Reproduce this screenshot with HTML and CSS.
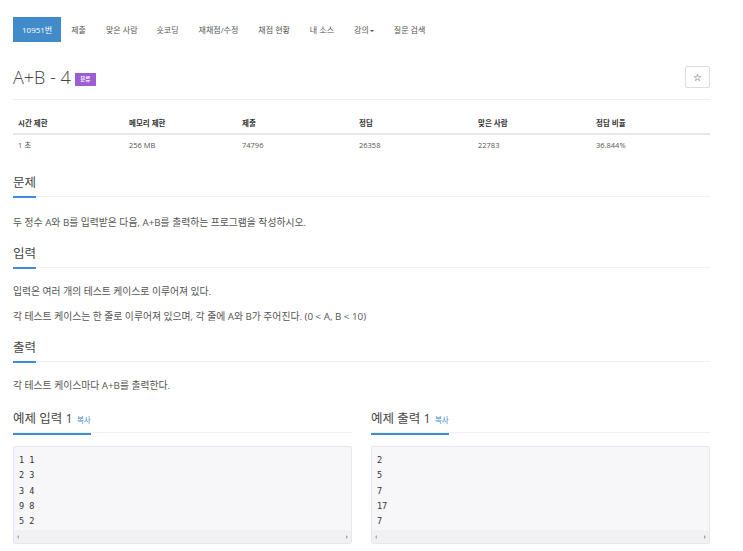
FILE: index.html
```html
<!DOCTYPE html>
<html lang="ko">
<head>
<meta charset="utf-8">
<link rel="stylesheet" href="styles.css">
</head>
<body>
<div class="wrap">
  <ul class="nav">
    <li class="active">10951번</li>
    <li>제출</li>
    <li>맞은 사람</li>
    <li>숏코딩</li>
    <li>재채점/수정</li>
    <li>채점 현황</li>
    <li>내 소스</li>
    <li>강의<span class="caret"></span></li>
    <li>질문 검색</li>
  </ul>

  <div class="page-header">
    <h1 class="title">A+B - 4<span class="badge">분류</span></h1>
    <span class="star-btn">☆</span>
  </div>

  <table class="info">
    <colgroup>
      <col style="width:111px"><col style="width:113px"><col style="width:117px"><col style="width:119px"><col style="width:118px"><col style="width:119px">
    </colgroup>
    <thead>
      <tr><th>시간 제한</th><th>메모리 제한</th><th>제출</th><th>정답</th><th>맞은 사람</th><th>정답 비율</th></tr>
    </thead>
    <tbody>
      <tr><td><span class="num">1</span> 초</td><td>256 MB</td><td>74796</td><td>26358</td><td>22783</td><td>36.844%</td></tr>
    </tbody>
  </table>

  <section class="sec first">
    <div class="headline"><h2>문제</h2></div>
    <p>두 정수 A와 B를 입력받은 다음, A+B를 출력하는 프로그램을 작성하시오.</p>
  </section>

  <section class="sec">
    <div class="headline"><h2>입력</h2></div>
    <p>입력은 여러 개의 테스트 케이스로 이루어져 있다.</p>
    <p>각 테스트 케이스는 한 줄로 이루어져 있으며, 각 줄에 A와 B가 주어진다. (0 &lt; A, B &lt; 10)</p>
  </section>

  <section class="sec">
    <div class="headline"><h2>출력</h2></div>
    <p>각 테스트 케이스마다 A+B를 출력한다.</p>
  </section>

  <div class="samples">
    <section class="sample">
      <div class="headline"><h2>예제 입력 1 <span class="copy">복사</span></h2></div>
      <div class="pre-box">
        <pre>1 1
2 3
3 4
9 8
5 2</pre>
        <div class="scroll"><span class="arr-l"></span><span class="arr-r"></span></div>
      </div>
    </section>
    <section class="sample">
      <div class="headline"><h2>예제 출력 1 <span class="copy">복사</span></h2></div>
      <div class="pre-box">
        <pre>2
5
7
17
7</pre>
        <div class="scroll"><span class="arr-l"></span><span class="arr-r"></span></div>
      </div>
    </section>
  </div>
</div>
</body>
</html>
```

FILE: styles.css
```css
* { box-sizing: border-box; }
html, body { margin: 0; padding: 0; background: #fff; }
body {
  font-family: "Open Sans", "Noto Sans CJK KR", sans-serif;
  font-size: 9px;
  color: #555;
}
.wrap { padding: 17px 33px 0 13px; }

.nav {
  list-style: none;
  margin: 0;
  padding: 0;
  display: flex;
  height: 25px;
}
.nav li {
  padding: 0 10px;
  font-size: 8px;
  line-height: 25px;
  color: #555;
  white-space: nowrap;
}
.nav li:nth-child(3) { padding-right: 9px; }
.nav li.active {
  background: #428bca;
  color: #fff;
  padding: 0 9px;
}
.caret {
  display: inline-block;
  width: 0; height: 0;
  margin-left: 1px;
  vertical-align: middle;
  border-top: 2px solid #555;
  border-left: 2px solid transparent;
  border-right: 2px solid transparent;
}

.page-header {
  margin-top: 24px;
  display: flex;
  align-items: center;
  justify-content: space-between;
  padding-bottom: 11px;
  border-bottom: 1px solid #eee;
}
.title {
  margin: 0;
  font-size: 18px;
  font-weight: 300;
  color: #444;
  line-height: 22px;
  display: flex;
  align-items: center;
}
.badge {
  display: inline-block;
  margin-left: 4px;
  margin-top: 4px;
  background: #9b5fd3;
  color: #fff;
  font-size: 5.5px;
  font-weight: 700;
  width: 21px;
  height: 13px;
  line-height: 13px;
  text-align: center;
}
.star-btn {
  width: 25px;
  height: 22px;
  border: 1px solid #ddd;
  border-radius: 2px;
  display: flex;
  align-items: center;
  justify-content: center;
  font-size: 10px;
  color: #222;
  font-family: "DejaVu Sans", sans-serif;
}

.info {
  margin-top: 12px;
  border-collapse: collapse;
  width: 697px;
  table-layout: fixed;
}
.info th {
  text-align: left;
  font-size: 7.5px;
  font-weight: 700;
  color: #333;
  line-height: 11px;
  padding: 6px 5px 4px;
  border-bottom: 2px solid #e6e6e6;
}
.info td {
  font-size: 7.5px;
  line-height: 11px;
  padding: 5px 5px;
  color: #555;
}
.num { color: #7a4d9b; }

.sec { margin-top: 16px; }
.sec.first { margin-top: 18px; }
.headline {
  border-bottom: 1px solid #f1f1f1;
  height: 23px;
}
.headline h2 {
  display: inline-block;
  margin: 0;
  font-size: 12.5px;
  font-weight: 400;
  color: #444;
  line-height: 18px;
  padding-bottom: 4px;
  border-bottom: 2px solid #3c8dd6;
}
.sec p {
  margin: 13px 0 0;
  line-height: 12px;
  font-size: 9.8px;
  color: #555;
}
.sec .headline + p { margin-top: 18px; }
.sec.first .headline + p { margin-top: 20px; }

.copy {
  font-size: 7.5px;
  color: #428bca;
  margin-left: 1px;
}

.samples {
  margin-top: 18px;
  display: grid;
  grid-template-columns: 339px 339px;
  column-gap: 19px;
}
.pre-box {
  margin-top: 13px;
  background: #f7f7f9;
  border: 1px solid #e6e6ec;
  border-radius: 2px;
}
.pre-box pre {
  margin: 0;
  padding: 6px 5px 1px;
  font-family: "DejaVu Sans Mono", monospace;
  font-size: 8.5px;
  line-height: 15.3px;
  color: #333;
}
.scroll {
  height: 13px;
  background: #f1f1f3;
  display: flex;
  justify-content: space-between;
  align-items: center;
  padding: 0 3px;
}
.arr-l, .arr-r {
  width: 0; height: 0;
  border-top: 2px solid transparent;
  border-bottom: 2px solid transparent;
}
.arr-l { border-right: 2px solid #aaa; }
.arr-r { border-left: 2px solid #aaa; }
```
